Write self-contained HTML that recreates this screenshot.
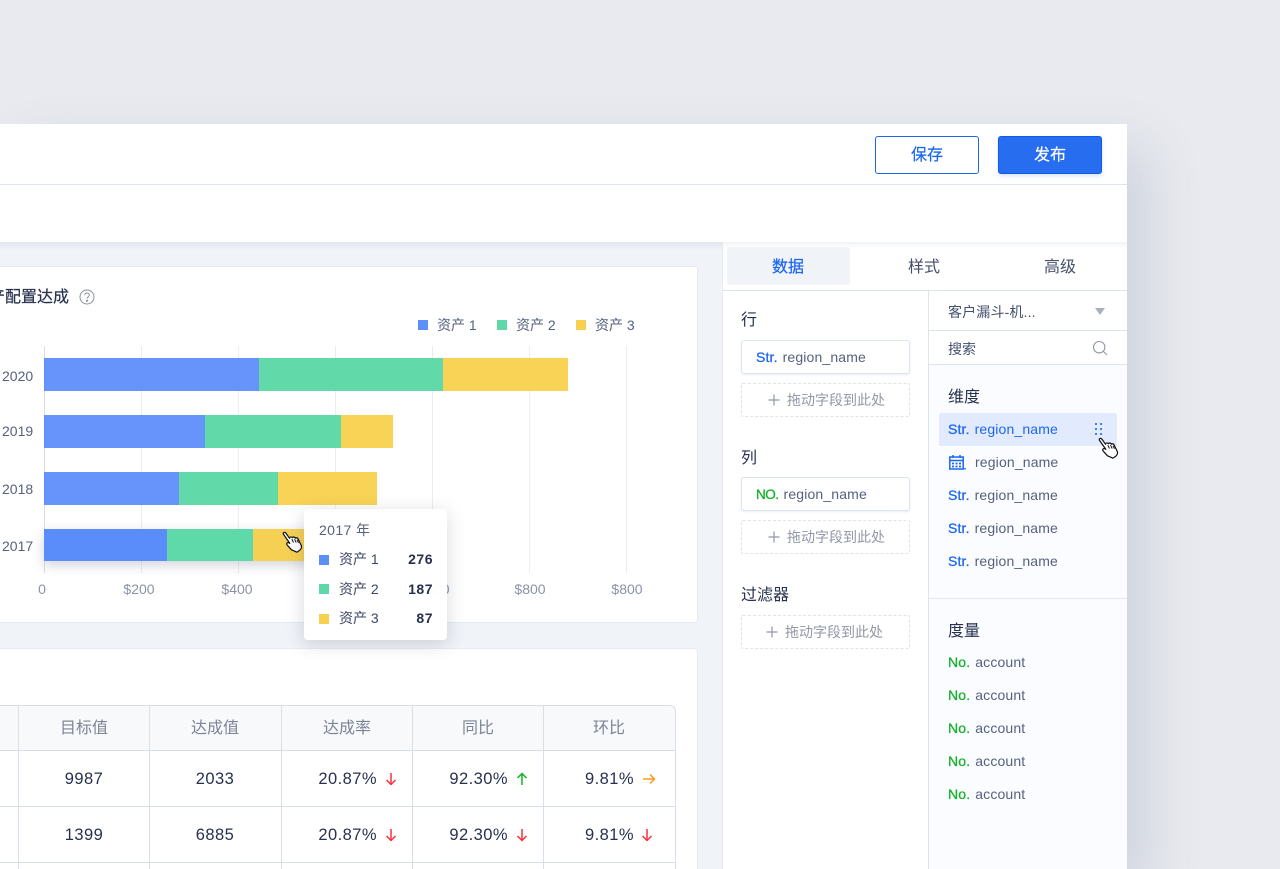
<!DOCTYPE html>
<html lang="zh">
<head>
<meta charset="utf-8">
<title>Dashboard</title>
<style>
*{box-sizing:border-box}
html,body{margin:0;padding:0;width:1280px;height:869px;overflow:hidden;background:#e8eaef;font-family:"Liberation Sans","Noto Sans CJK SC",sans-serif;color:#1f2a44}
#root{position:absolute;left:0;top:0;width:1280px;height:869px;overflow:hidden;background:#e8eaef}
.a{position:absolute}
.t{position:absolute;white-space:nowrap;line-height:20px;height:20px}
.c{transform:translateX(-50%)}
.r{transform:translateX(-100%)}
.blue{color:#1d67f0}
.green{color:#14b22a}
.field{font-size:14px;color:#56617c;letter-spacing:.15px}
.field b{font-weight:400;-webkit-text-stroke:.3px currentColor;margin-right:5px}
.box{position:absolute;left:741px;width:169px;height:34px;background:#fff;border:1px solid #dde3ef;border-radius:3px;box-shadow:0 1px 2px rgba(60,80,130,.1)}
.drop{position:absolute;left:741px;width:169px;height:34px;border:1px dashed #dfe3ec;border-radius:2px}
.dt{font-size:14px;color:#9198a8}
.sq{position:absolute;width:10px;height:10px}
.gl{position:absolute;top:346px;width:1px;height:227px;background:#ecedf1}
.seg{position:absolute;height:33px;opacity:.93}
.th{font-size:16px;color:#7c8497;text-align:center}
.td{font-size:16.5px;color:#27314f;letter-spacing:.45px}
.vl{position:absolute;top:705px;height:164px;width:1px;background:#d8deea}
.hl{position:absolute;left:0;width:675px;height:1px;background:#d8deea}
.ax{font-size:14px;color:#8a92a5}
.yl{font-size:14px;color:#56617c}
.sec{font-size:16px;color:#27314f}
.lg{font-size:14px;color:#56617c}
.num{font-size:14px;font-weight:700;color:#27314f;letter-spacing:.5px}
</style>
</head>
<body>
<div id="root">
<!-- window -->
<div class="a" style="left:0;top:124px;width:1127px;height:745px;background:#fff;box-shadow:20px 24px 50px rgba(80,95,130,.17)"></div>
<div class="a" style="left:0;top:184px;width:1127px;height:1px;background:#dde3ef"></div>

<!-- buttons -->
<div class="a" style="left:875px;top:136px;width:104px;height:38px;border:1px solid #1d67f0;border-radius:3px;background:#fff;color:#1d67f0;font-size:16px;line-height:36px;text-align:center;-webkit-text-stroke:.2px #1d67f0"><span style="position:relative;top:1px">保存</span></div>
<div class="a" style="left:998px;top:136px;width:104px;height:38px;border:1px solid #1459e0;border-radius:3px;background:#266df0;color:#fff;font-size:16px;line-height:36px;text-align:center;box-shadow:0 2px 5px rgba(40,100,230,.18);-webkit-text-stroke:.2px #fff"><span style="position:relative;top:1px">发布</span></div>

<!-- content area -->
<div class="a" style="left:0;top:242px;width:723px;height:627px;background:#f0f3f8"></div>
<div class="a" style="left:0;top:242px;width:1127px;height:8px;background:linear-gradient(180deg,rgba(120,135,170,.13),rgba(120,135,170,0))"></div>

<!-- chart card -->
<div class="a" style="left:0;top:266px;width:698px;height:357px;background:#fff;border:1px solid #e6eaf2;border-left:0;border-radius:0 3px 3px 0"></div>
<div class="a" style="left:0;top:287px;width:72px;height:22px;overflow:hidden"><div class="t" style="left:-11px;top:1px;font-size:16px;color:#27314f;-webkit-text-stroke:.2px #27314f">产配置达成</div></div>
<svg class="a" style="left:79px;top:289px" width="16" height="16" viewBox="0 0 16 16" fill="none" stroke="#8a92a5" stroke-width="1"><circle cx="8" cy="8" r="7"/><path d="M5.700 6.200C5.700 4.900 6.800 4 8 4s2.300.8 2.300 2.100c0 1.700-2.300 1.700-2.300 3.500"/><circle cx="8" cy="11.700" r=".6" fill="#8a92a5"/></svg>

<!-- legend -->
<div class="sq" style="left:418px;top:320px;background:#5c8ffa"></div>
<div class="t lg" style="left:437px;top:315px">资产 1</div>
<div class="sq" style="left:497px;top:320px;background:#5ed8a8"></div>
<div class="t lg" style="left:516px;top:315px">资产 2</div>
<div class="sq" style="left:576px;top:320px;background:#f8d04f"></div>
<div class="t lg" style="left:595px;top:315px">资产 3</div>

<!-- grid -->
<div class="gl" style="left:44px;background:#dcdee4"></div>
<div class="gl" style="left:141px"></div>
<div class="gl" style="left:238px"></div>
<div class="gl" style="left:335px"></div>
<div class="gl" style="left:432px"></div>
<div class="gl" style="left:529px"></div>
<div class="gl" style="left:626px"></div>

<!-- y labels -->
<div class="t yl" style="left:2px;top:366px">2020</div>
<div class="t yl" style="left:2px;top:421px">2019</div>
<div class="t yl" style="left:2px;top:479px">2018</div>
<div class="t yl" style="left:2px;top:536px">2017</div>

<!-- bars -->
<div class="seg" style="left:44px;top:358px;width:215px;background:#5a8cfa"></div>
<div class="seg" style="left:259px;top:358px;width:184px;background:#55d6a3"></div>
<div class="seg" style="left:443px;top:358px;width:125px;background:#f7d048"></div>

<div class="seg" style="left:44px;top:415px;width:161px;background:#5a8cfa"></div>
<div class="seg" style="left:205px;top:415px;width:136px;background:#55d6a3"></div>
<div class="seg" style="left:341px;top:415px;width:52px;background:#f7d048"></div>

<div class="seg" style="left:44px;top:472px;width:135px;background:#5a8cfa"></div>
<div class="seg" style="left:179px;top:472px;width:99px;background:#55d6a3"></div>
<div class="seg" style="left:278px;top:472px;width:99px;background:#f7d048"></div>

<div class="a" style="left:44px;top:529px;width:270px;height:32px;box-shadow:0 4px 12px rgba(50,60,90,.22)"></div>
<div class="seg" style="left:44px;top:529px;width:123px;height:32px;background:#5a8cfa;opacity:1"></div>
<div class="seg" style="left:167px;top:529px;width:86px;height:32px;background:#5fd9a9;opacity:1"></div>
<div class="seg" style="left:253px;top:529px;width:60px;height:32px;background:#f6d052;opacity:1"></div>

<!-- x labels -->
<div class="t ax c" style="left:42px;top:579px">0</div>
<div class="t ax c" style="left:139px;top:579px">$200</div>
<div class="t ax c" style="left:237px;top:579px">$400</div>
<div class="t ax c" style="left:434px;top:579px">$600</div>
<div class="t ax c" style="left:530px;top:579px">$800</div>
<div class="t ax c" style="left:627px;top:579px">$800</div>

<!-- cursor on chart -->
<svg class="a" style="left:282px;top:531px" width="21" height="22" viewBox="0 0 21 22"><path d="M1.300 3C1 1.500 2.900.7 3.800 2L7.500 7.200C7.900 5.700 9.800 5.500 10.400 6.800 11 5.600 12.900 5.800 13.300 7.200 14.200 6.300 15.900 6.900 16.200 8.200L19.300 14.500C20 16.500 19 18 18 19L15 21.200 9.500 18.800 5.300 14.200C4 12.700 5 11 7 11.800L7.800 12.400Z" fill="#fff" stroke="#111" stroke-width="1.200" stroke-linejoin="round"/><path d="M9.800 8.200l1.700 3.300M12.500 8.200l1.700 3.300M15 8.800l1.500 3" stroke="#111" stroke-width="1" fill="none"/></svg>

<!-- second card -->
<div class="a" style="left:0;top:648px;width:698px;height:221px;background:#fff;border:1px solid #e6eaf2;border-left:0;border-bottom:0;border-radius:0 3px 0 0"></div>

<!-- table -->
<div class="a" style="left:0;top:705px;width:676px;height:164px;border:1px solid #d8deea;border-left:0;border-bottom:0;border-top-right-radius:6px;overflow:hidden;background:#fff">
  <div class="a" style="left:0;top:0;width:676px;height:44px;background:#f8f9fb"></div>
</div>
<div class="hl" style="top:750px"></div>
<div class="hl" style="top:806px"></div>
<div class="hl" style="top:862px"></div>
<div class="vl" style="left:18px"></div>
<div class="vl" style="left:149px"></div>
<div class="vl" style="left:281px"></div>
<div class="vl" style="left:412px"></div>
<div class="vl" style="left:543px"></div>

<div class="t th c" style="left:84px;top:719px">目标值</div>
<div class="t th c" style="left:215px;top:719px">达成值</div>
<div class="t th c" style="left:347px;top:719px">达成率</div>
<div class="t th c" style="left:478px;top:719px">同比</div>
<div class="t th c" style="left:609px;top:719px">环比</div>

<div class="t td c" style="left:84px;top:769px">9987</div>
<div class="t td c" style="left:215px;top:769px">2033</div>
<div class="t td r" style="left:377px;top:769px">20.87%</div>
<div class="t td r" style="left:508px;top:769px">92.30%</div>
<div class="t td r" style="left:634px;top:769px">9.81%</div>

<div class="t td c" style="left:84px;top:825px">1399</div>
<div class="t td c" style="left:215px;top:825px">6885</div>
<div class="t td r" style="left:377px;top:825px">20.87%</div>
<div class="t td r" style="left:508px;top:825px">92.30%</div>
<div class="t td r" style="left:634px;top:825px">9.81%</div>

<svg class="a" style="left:384px;top:772px" width="14" height="14" viewBox="0 0 14 14" fill="none" stroke="#f5323c" stroke-width="1.500"><path d="M7 1v11.500M2.500 8L7 12.500 11.500 8"/></svg>
<svg class="a" style="left:515px;top:772px" width="14" height="14" viewBox="0 0 14 14" fill="none" stroke="#14b22a" stroke-width="1.500"><path d="M7 13V1.500M2.500 6L7 1.500 11.500 6"/></svg>
<svg class="a" style="left:642px;top:772px" width="14" height="14" viewBox="0 0 14 14" fill="none" stroke="#fa9d1e" stroke-width="1.500"><path d="M1 7h11.500M8 2.500L12.500 7 8 11.500"/></svg>
<svg class="a" style="left:384px;top:828px" width="14" height="14" viewBox="0 0 14 14" fill="none" stroke="#f5323c" stroke-width="1.500"><path d="M7 1v11.500M2.500 8L7 12.500 11.500 8"/></svg>
<svg class="a" style="left:515px;top:828px" width="14" height="14" viewBox="0 0 14 14" fill="none" stroke="#f5323c" stroke-width="1.500"><path d="M7 1v11.500M2.500 8L7 12.500 11.500 8"/></svg>
<svg class="a" style="left:640px;top:828px" width="14" height="14" viewBox="0 0 14 14" fill="none" stroke="#f5323c" stroke-width="1.500"><path d="M7 1v11.500M2.500 8L7 12.500 11.500 8"/></svg>

<!-- tooltip -->
<div class="a" style="left:304px;top:509px;width:143px;height:131px;background:rgba(255,255,255,.97);border-radius:4px;box-shadow:0 4px 18px rgba(50,60,90,.2)"></div>
<div class="t" style="left:319px;top:520px;font-size:14px;color:#56617c;letter-spacing:.4px">2017 年</div>
<div class="sq" style="left:319px;top:555px;background:#5c8ffa"></div>
<div class="t lg" style="left:339px;top:549px;color:#3c4663">资产 1</div>
<div class="t r num" style="left:433px;top:549px">276</div>
<div class="sq" style="left:319px;top:584px;background:#5ed8a8"></div>
<div class="t lg" style="left:339px;top:579px;color:#3c4663">资产 2</div>
<div class="t r num" style="left:433px;top:579px">187</div>
<div class="sq" style="left:319px;top:614px;background:#f8d04f"></div>
<div class="t lg" style="left:339px;top:608px;color:#3c4663">资产 3</div>
<div class="t r num" style="left:433px;top:608px">87</div>

<!-- right panel -->
<div class="a" style="left:722px;top:242px;width:405px;height:627px;background:#fff;border-left:1px solid #e6eaf2"></div>
<div class="a" style="left:723px;top:242px;width:404px;height:6px;background:linear-gradient(180deg,rgba(120,135,170,.1),rgba(120,135,170,0))"></div>
<div class="a" style="left:727px;top:247px;width:123px;height:38px;background:#f0f3f8;border-radius:3px"></div>
<div class="t c blue" style="left:788px;top:258px;font-size:16px;-webkit-text-stroke:.25px #1d67f0">数据</div>
<div class="t c" style="left:924px;top:258px;font-size:16px;color:#46506c">样式</div>
<div class="t c" style="left:1060px;top:258px;font-size:16px;color:#46506c">高级</div>
<div class="a" style="left:723px;top:290px;width:404px;height:1px;background:#dde3ef"></div>

<!-- right sub column -->
<div class="a" style="left:928px;top:291px;width:199px;height:578px;background:#fbfcff;border-left:1px solid #dde3ef"></div>
<div class="a" style="left:929px;top:291px;width:198px;height:74px;background:#fff"></div>
<div class="a" style="left:929px;top:330px;width:198px;height:1px;background:#dde3ef"></div>
<div class="a" style="left:929px;top:364px;width:198px;height:1px;background:#dde3ef"></div>
<div class="a" style="left:929px;top:598px;width:198px;height:1px;background:#e3e7f0"></div>

<div class="t" style="left:948px;top:302px;font-size:14px;color:#46506c;letter-spacing:.15px">客户漏斗-机...</div>
<svg class="a" style="left:1095px;top:308px" width="10" height="7" viewBox="0 0 10 7"><path d="M0 0h10L5 7z" fill="#a9afbd"/></svg>
<div class="t" style="left:948px;top:339px;font-size:14px;color:#46506c">搜索</div>
<svg class="a" style="left:1092px;top:340px" width="16" height="16" viewBox="0 0 16 16" fill="none" stroke="#8f96a8" stroke-width="1.100"><circle cx="7.200" cy="7.200" r="5.700"/><path d="M11.400 11.400L15 15"/></svg>

<!-- left sub column -->
<div class="t sec" style="left:741px;top:311px">行</div>
<div class="box" style="top:340px"></div>
<div class="t field" style="left:756px;top:347px"><b class="blue">Str.</b>region_name</div>
<div class="drop" style="top:383px"></div>
<svg class="a" style="left:768px;top:394px" width="12" height="12" viewBox="0 0 12 12" stroke="#8f96a8" stroke-width="1.200"><path d="M6 .5v11M.5 6h11"/></svg>
<div class="t dt" style="left:787px;top:390px">拖动字段到此处</div>

<div class="t sec" style="left:741px;top:449px">列</div>
<div class="box" style="top:477px"></div>
<div class="t field" style="left:756px;top:484px"><b class="green" style="margin-right:5px;letter-spacing:-.5px;font-size:13.5px">NO.</b>region_name</div>
<div class="drop" style="top:520px"></div>
<svg class="a" style="left:768px;top:531px" width="12" height="12" viewBox="0 0 12 12" stroke="#8f96a8" stroke-width="1.200"><path d="M6 .5v11M.5 6h11"/></svg>
<div class="t dt" style="left:787px;top:527px">拖动字段到此处</div>

<div class="t sec" style="left:741px;top:586px">过滤器</div>
<div class="drop" style="top:615px"></div>
<svg class="a" style="left:766px;top:626px" width="12" height="12" viewBox="0 0 12 12" stroke="#8f96a8" stroke-width="1.200"><path d="M6 .5v11M.5 6h11"/></svg>
<div class="t dt" style="left:785px;top:622px">拖动字段到此处</div>

<!-- dims -->
<div class="t sec" style="left:948px;top:388px">维度</div>
<div class="a" style="left:939px;top:413px;width:178px;height:33px;background:#e1ebfd;border-radius:2px"></div>
<div class="t field" style="left:948px;top:419px;color:#1d67f0"><b class="blue">Str.</b>region_name</div>
<svg class="a" style="left:1095px;top:423px" width="8" height="13" viewBox="0 0 8 13" fill="#3f7ff2"><rect x="0" y="0" width="2" height="2"/><rect x="5" y="0" width="2" height="2"/><rect x="0" y="5" width="2" height="2"/><rect x="5" y="5" width="2" height="2"/><rect x="0" y="10" width="2" height="2"/><rect x="5" y="10" width="2" height="2"/></svg>
<svg class="a" style="left:1098px;top:437px" width="21" height="22" viewBox="0 0 21 22"><path d="M1.300 3C1 1.500 2.900.7 3.800 2L7.500 7.200C7.900 5.700 9.800 5.500 10.400 6.800 11 5.600 12.900 5.800 13.300 7.200 14.200 6.300 15.900 6.900 16.200 8.200L19.300 14.500C20 16.500 19 18 18 19L15 21.200 9.500 18.800 5.300 14.200C4 12.700 5 11 7 11.800L7.800 12.400Z" fill="#fff" stroke="#111" stroke-width="1.200" stroke-linejoin="round"/><path d="M9.800 8.200l1.700 3.300M12.500 8.200l1.700 3.300M15 8.800l1.500 3" stroke="#111" stroke-width="1" fill="none"/></svg>

<svg class="a" style="left:949px;top:455px" width="17" height="15" viewBox="0 0 17 15" fill="none" stroke="#1d67f0" stroke-width="1.500"><rect x=".8" y="2" width="13.400" height="12"/><path d="M.8 5.500h13.400M4 0v3M11 0v3"/><path d="M3 8.500h2M6.500 8.500h2M10 8.500h2M3 11.500h2M6.500 11.500h2M10 11.500h2" stroke-width="1.700"/><circle cx="16" cy="13.800" r=".9" fill="#1d67f0" stroke="none"/></svg>
<div class="t field" style="left:975px;top:452px">region_name</div>
<div class="t field" style="left:948px;top:485px"><b class="blue">Str.</b>region_name</div>
<div class="t field" style="left:948px;top:518px"><b class="blue">Str.</b>region_name</div>
<div class="t field" style="left:948px;top:551px"><b class="blue">Str.</b>region_name</div>

<!-- measures -->
<div class="t sec" style="left:948px;top:622px">度量</div>
<div class="t field" style="left:948px;top:652px"><b class="green">No.</b>account</div>
<div class="t field" style="left:948px;top:685px"><b class="green">No.</b>account</div>
<div class="t field" style="left:948px;top:718px"><b class="green">No.</b>account</div>
<div class="t field" style="left:948px;top:751px"><b class="green">No.</b>account</div>
<div class="t field" style="left:948px;top:784px"><b class="green">No.</b>account</div>
</div>
</body>
</html>
